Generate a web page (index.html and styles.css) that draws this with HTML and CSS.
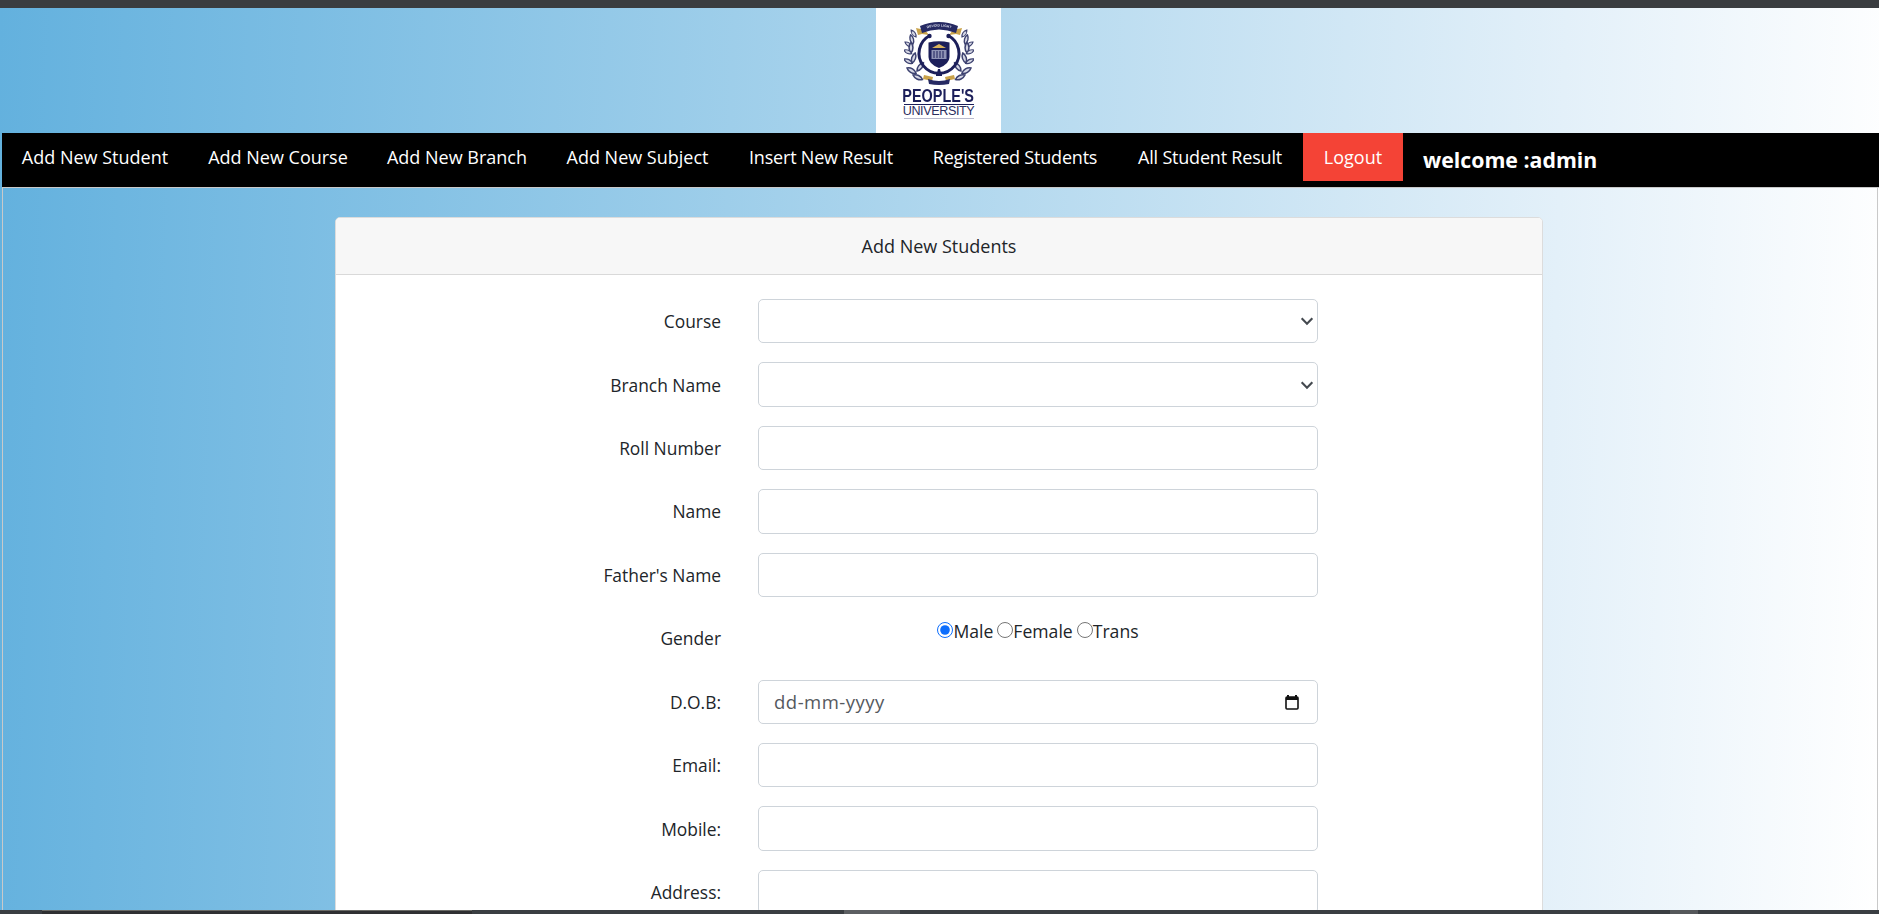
FILE: index.html
```html
<!DOCTYPE html>
<html lang="en">
<head>
<meta charset="utf-8">
<title>Add New Students</title>
<link rel="stylesheet" href="styles.css">
</head>
<body>
<div class="topbar"></div>
<main class="page">
  <header class="banner">
    <div class="logo">
      <svg class="emblem" viewBox="0 0 70 64" width="70" height="64" aria-hidden="true">
        <defs>
          <path id="leaf" d="M0 0C3 -2.6 7.5 -2.6 10.5 0C7.5 2.6 3 2.6 0 0Z"/>
          <g id="laurel" fill="#d5d7e4" stroke="#3d4270" stroke-width="1.5">
            <use href="#leaf" transform="translate(12 15) rotate(-125) scale(.8)"/>
            <use href="#leaf" transform="translate(9 22) rotate(-105) scale(.9)"/>
            <use href="#leaf" transform="translate(1 20) rotate(35) scale(.75)"/>
            <use href="#leaf" transform="translate(7 31) rotate(-90)"/>
            <use href="#leaf" transform="translate(0 28) rotate(25) scale(.8)"/>
            <use href="#leaf" transform="translate(8 41) rotate(-72)"/>
            <use href="#leaf" transform="translate(0 37) rotate(28) scale(.9)"/>
            <use href="#leaf" transform="translate(13 49) rotate(-52)"/>
            <use href="#leaf" transform="translate(3 46) rotate(30)"/>
            <use href="#leaf" transform="translate(9 53) rotate(25)"/>
          </g>
          <path id="arcTop" d="M16 9Q35 0 54 9"/>
        </defs>
        <use href="#laurel"/>
        <use href="#laurel" transform="translate(70 0) scale(-1 1)"/>
        <path d="M12 6L21 8L25 13L18 12L14 13Z" fill="#c9a24a"/>
        <path d="M58 6L49 8L45 13L52 12L56 13Z" fill="#c9a24a"/>
        <path d="M16 4Q35 -4 54 4L52 11Q35 4 18 11Z" fill="#262a63"/>
        <text class="ribbon-text"><textPath href="#arcTop" startOffset="50%" text-anchor="middle">DEVOID LIGHT</textPath></text>
        <path d="M26 13.5A20 20 0 1 0 44 13.5" fill="none" stroke="#1c1f5a" stroke-width="3"/>
        <circle cx="25.5" cy="14" r="2.2" fill="#1c1f5a"/>
        <circle cx="44.5" cy="14" r="2.2" fill="#1c1f5a"/>
        <path d="M24.500 20.500Q35 18 45.500 20.500V35Q45.500 42 35 46Q24.500 42 24.500 35Z" fill="#1c1f5a"/>
        <path d="M28 26L35 22L42 26Z" fill="#d8b25c"/>
        <path d="M27.500 28H42.500V37H27.500Z" fill="#8f93b5"/>
        <path d="M30 29V36M33 29V36M36 29V36M39 29V36" stroke="#1c1f5a" stroke-width="1"/>
        <path d="M33 51H37L36 47H34ZM32 54H38V52H32Z" fill="#1c1f5a"/>
        <path d="M20 53L29 55L28 59L19 57Z" fill="#c9a24a"/>
        <path d="M50 53L41 55L42 59L51 57Z" fill="#c9a24a"/>
        <path d="M24 57Q35 61 46 57L45 62Q35 64 25 62Z" fill="#262a63"/>
      </svg>
      <div class="wordmark"><span class="wordmark-text">PEOPLE'S</span></div>
      <div class="wordline">UNIVERSITY</div>
      <div class="wordfine"></div>
    </div>
  </header>

  <nav class="nav">
    <a class="nav-link" href="#">Add New Student</a>
    <a class="nav-link" href="#">Add New Course</a>
    <a class="nav-link" href="#">Add New Branch</a>
    <a class="nav-link" href="#">Add New Subject</a>
    <a class="nav-link" href="#">Insert New Result</a>
    <a class="nav-link" href="#">Registered Students</a>
    <a class="nav-link" href="#">All Student Result</a>
    <a class="nav-link logout" href="#">Logout</a>
    <span class="welcome">welcome :admin</span>
  </nav>

  <section class="content">
    <div class="card">
      <div class="card-header">Add New Students</div>
      <form class="card-body">
        <div class="row"><label class="label">Course</label><select class="control select"><option></option></select></div>
        <div class="row"><label class="label">Branch Name</label><select class="control select"><option></option></select></div>
        <div class="row"><label class="label">Roll Number</label><input class="control" type="text"></div>
        <div class="row"><label class="label">Name</label><input class="control" type="text"></div>
        <div class="row"><label class="label">Father's Name</label><input class="control" type="text"></div>
        <div class="row"><label class="label">Gender</label>
          <div class="radios">
            <input class="radio" type="radio" name="gender" checked><span class="radio-text">Male</span>
            <input class="radio" type="radio" name="gender"><span class="radio-text">Female</span>
            <input class="radio" type="radio" name="gender"><span class="radio-text">Trans</span>
          </div>
        </div>
        <div class="row"><label class="label">D.O.B:</label>
          <div class="control date"><span class="date-text">dd-mm-yyyy</span>
            <svg class="cal" viewBox="0 0 16 16" width="16" height="16" aria-hidden="true"><path d="M4 1v2M12 1v2" stroke="#111" stroke-width="2" fill="none"/><rect x="2" y="3" width="12" height="12" rx="1" fill="none" stroke="#111" stroke-width="1.6"/><rect x="2" y="3" width="12" height="3" fill="#111"/></svg>
          </div>
        </div>
        <div class="row"><label class="label">Email:</label><input class="control" type="text"></div>
        <div class="row"><label class="label">Mobile:</label><input class="control" type="text"></div>
        <div class="row"><label class="label">Address:</label><input class="control" type="text"></div>
      </form>
    </div>
  </section>
</main>
<div class="bottombar">
  <span class="seg seg-dark"></span>
  <span class="seg seg-thumb"></span>
  <span class="seg seg-thumb2"></span>
</div>
</body>
</html>
```
FILE: styles.css
```css
* { box-sizing: border-box; }
html, body { height: 100%; margin: 0; }
body {
  display: flex;
  flex-direction: column;
  overflow: hidden;
  font-family: "Open Sans", "Noto Sans", sans-serif;
  color: #212529;
  background: #fff;
}
.topbar { height: 8px; flex: none; background: #3a3d40; }
.page {
  flex: 1;
  min-height: 0;
  overflow: hidden;
  background: linear-gradient(92deg, #63b1de 0%, #a8d3ec 45%, #e3f0f9 82%, #fff 100%);
}
.banner { display: flex; justify-content: center; height: 125px; padding-right: 2px; }
.logo {
  width: 125px;
  height: 125px;
  background: #fff;
  display: flex;
  flex-direction: column;
  align-items: center;
  padding-top: 14px;
  color: #1c1f5a;
}
.emblem { display: block; flex: none; filter: blur(.3px); }
.ribbon-text { font: 700 3.4px "Liberation Sans", sans-serif; fill: #d9dbe8; }
.wordmark {
  display: flex;
  justify-content: center;
  font: 700 19px/16px "Liberation Sans", sans-serif;
  margin-top: 2px;
  width: 70px;
  border-bottom: 1.5px solid #1c1f5a;
  white-space: nowrap;
}
.wordmark-text { flex: none; transform: scaleX(.76); }
.wordline {
  font: 400 12.6px/11px "Liberation Sans", sans-serif;
  letter-spacing: -.4px;
  margin-top: 1px;
  color: #2a2d5e;
  white-space: nowrap;
}
.wordfine { width: 70px; height: 1px; margin-top: 1px; background: #b9bace; }

.nav {
  display: flex;
  align-items: flex-start;
  height: 55px;
  margin-left: 2px;
  background: #000;
  border-bottom: 1px solid #c9c9c9;
}
.nav-link {
  flex: none;
  width: 186px;
  height: 48px;
  font-size: 18px;
  line-height: 48px;
  text-align: center;
  color: #fff;
  text-decoration: none;
  white-space: nowrap;
}
.nav-link:nth-child(2) { width: 180px; }
.nav-link:nth-child(3) { width: 178px; }
.nav-link:nth-child(4) { width: 183px; }
.nav-link:nth-child(5) { width: 184px; letter-spacing: -.2px; }
.nav-link:nth-child(6) { width: 204px; letter-spacing: -.2px; }
.nav-link:nth-child(7) { width: 186px; letter-spacing: -.2px; }
.nav-link.logout { width: 100px; background: #f44336; }
.welcome {
  margin-left: 20px;
  font-size: 21.3px;
  font-weight: 700;
  line-height: 54px;
  color: #fff;
  white-space: nowrap;
}
.content {
  height: 900px;
  margin: 0 1px 0 2px;
  padding: 29px 2px 0 0;
  border-left: 1px solid #c9c9c9;
  border-right: 1px solid #c9c9c9;
  display: flex;
  justify-content: center;
}
.card {
  width: 1208px;
  height: 860px;
  background: #fff;
  border: 1px solid #dcdcdc;
  border-radius: 5px;
  overflow: hidden;
}
.card-header {
  height: 57px;
  background: #f7f7f7;
  border-bottom: 1px solid #d9d9d9;
  font-size: 18px;
  line-height: 56px;
  text-align: center;
}
.card-body { padding-top: 24px; }
.row {
  display: flex;
  gap: 37px;
  align-items: center;
  height: 44.4px;
  margin-bottom: 19.04px;
}
.label {
  width: 385px;
  text-align: right;
  font-size: 17.4px;
}
.control {
  width: 560px;
  height: 44.4px;
  background: #fff;
  border: 1px solid #ced4da;
  border-radius: 5px;
  font: inherit;
}
.select {
  appearance: none;
  background-image: url("data:image/svg+xml,%3Csvg xmlns='http://www.w3.org/2000/svg' viewBox='0 0 12 12'%3E%3Cpath d='M2 4l4 4 4-4' fill='none' stroke='%23454a50' stroke-width='1.6'/%3E%3C/svg%3E");
  background-repeat: no-repeat;
  background-position: right 2px center;
  background-size: 16px 16px;
}
.radios {
  width: 560px;
  align-self: flex-start;
  display: flex;
  justify-content: center;
  align-items: center;
  height: 24px;
  font-size: 17.6px;
  margin-top: 3px;
}
.radio { width: 16px; height: 16px; margin: 0 0 2px 0; accent-color: #0d6efd; flex: none; }
.radio-text { margin-right: 4px; }
.radio-text:last-child { margin-right: 0; }
.date {
  display: flex;
  align-items: center;
  justify-content: space-between;
  padding: 0 17px 0 15px;
}
.date-text { font-size: 18.5px; letter-spacing: .5px; color: #55595e; }
.cal { display: block; }

.bottombar {
  position: relative;
  flex: none;
  height: 4px;
  background: #3a3e42;
}
.seg { position: absolute; top: 0; bottom: 0; }
.seg-dark { left: 42px; width: 430px; background: #2f3032; border-top: 1px solid #6a6a66; }
.seg-thumb { left: 844px; width: 56px; background: #5c5f62; }
.seg-thumb2 { left: 1670px; width: 28px; background: #55585b; }
```
